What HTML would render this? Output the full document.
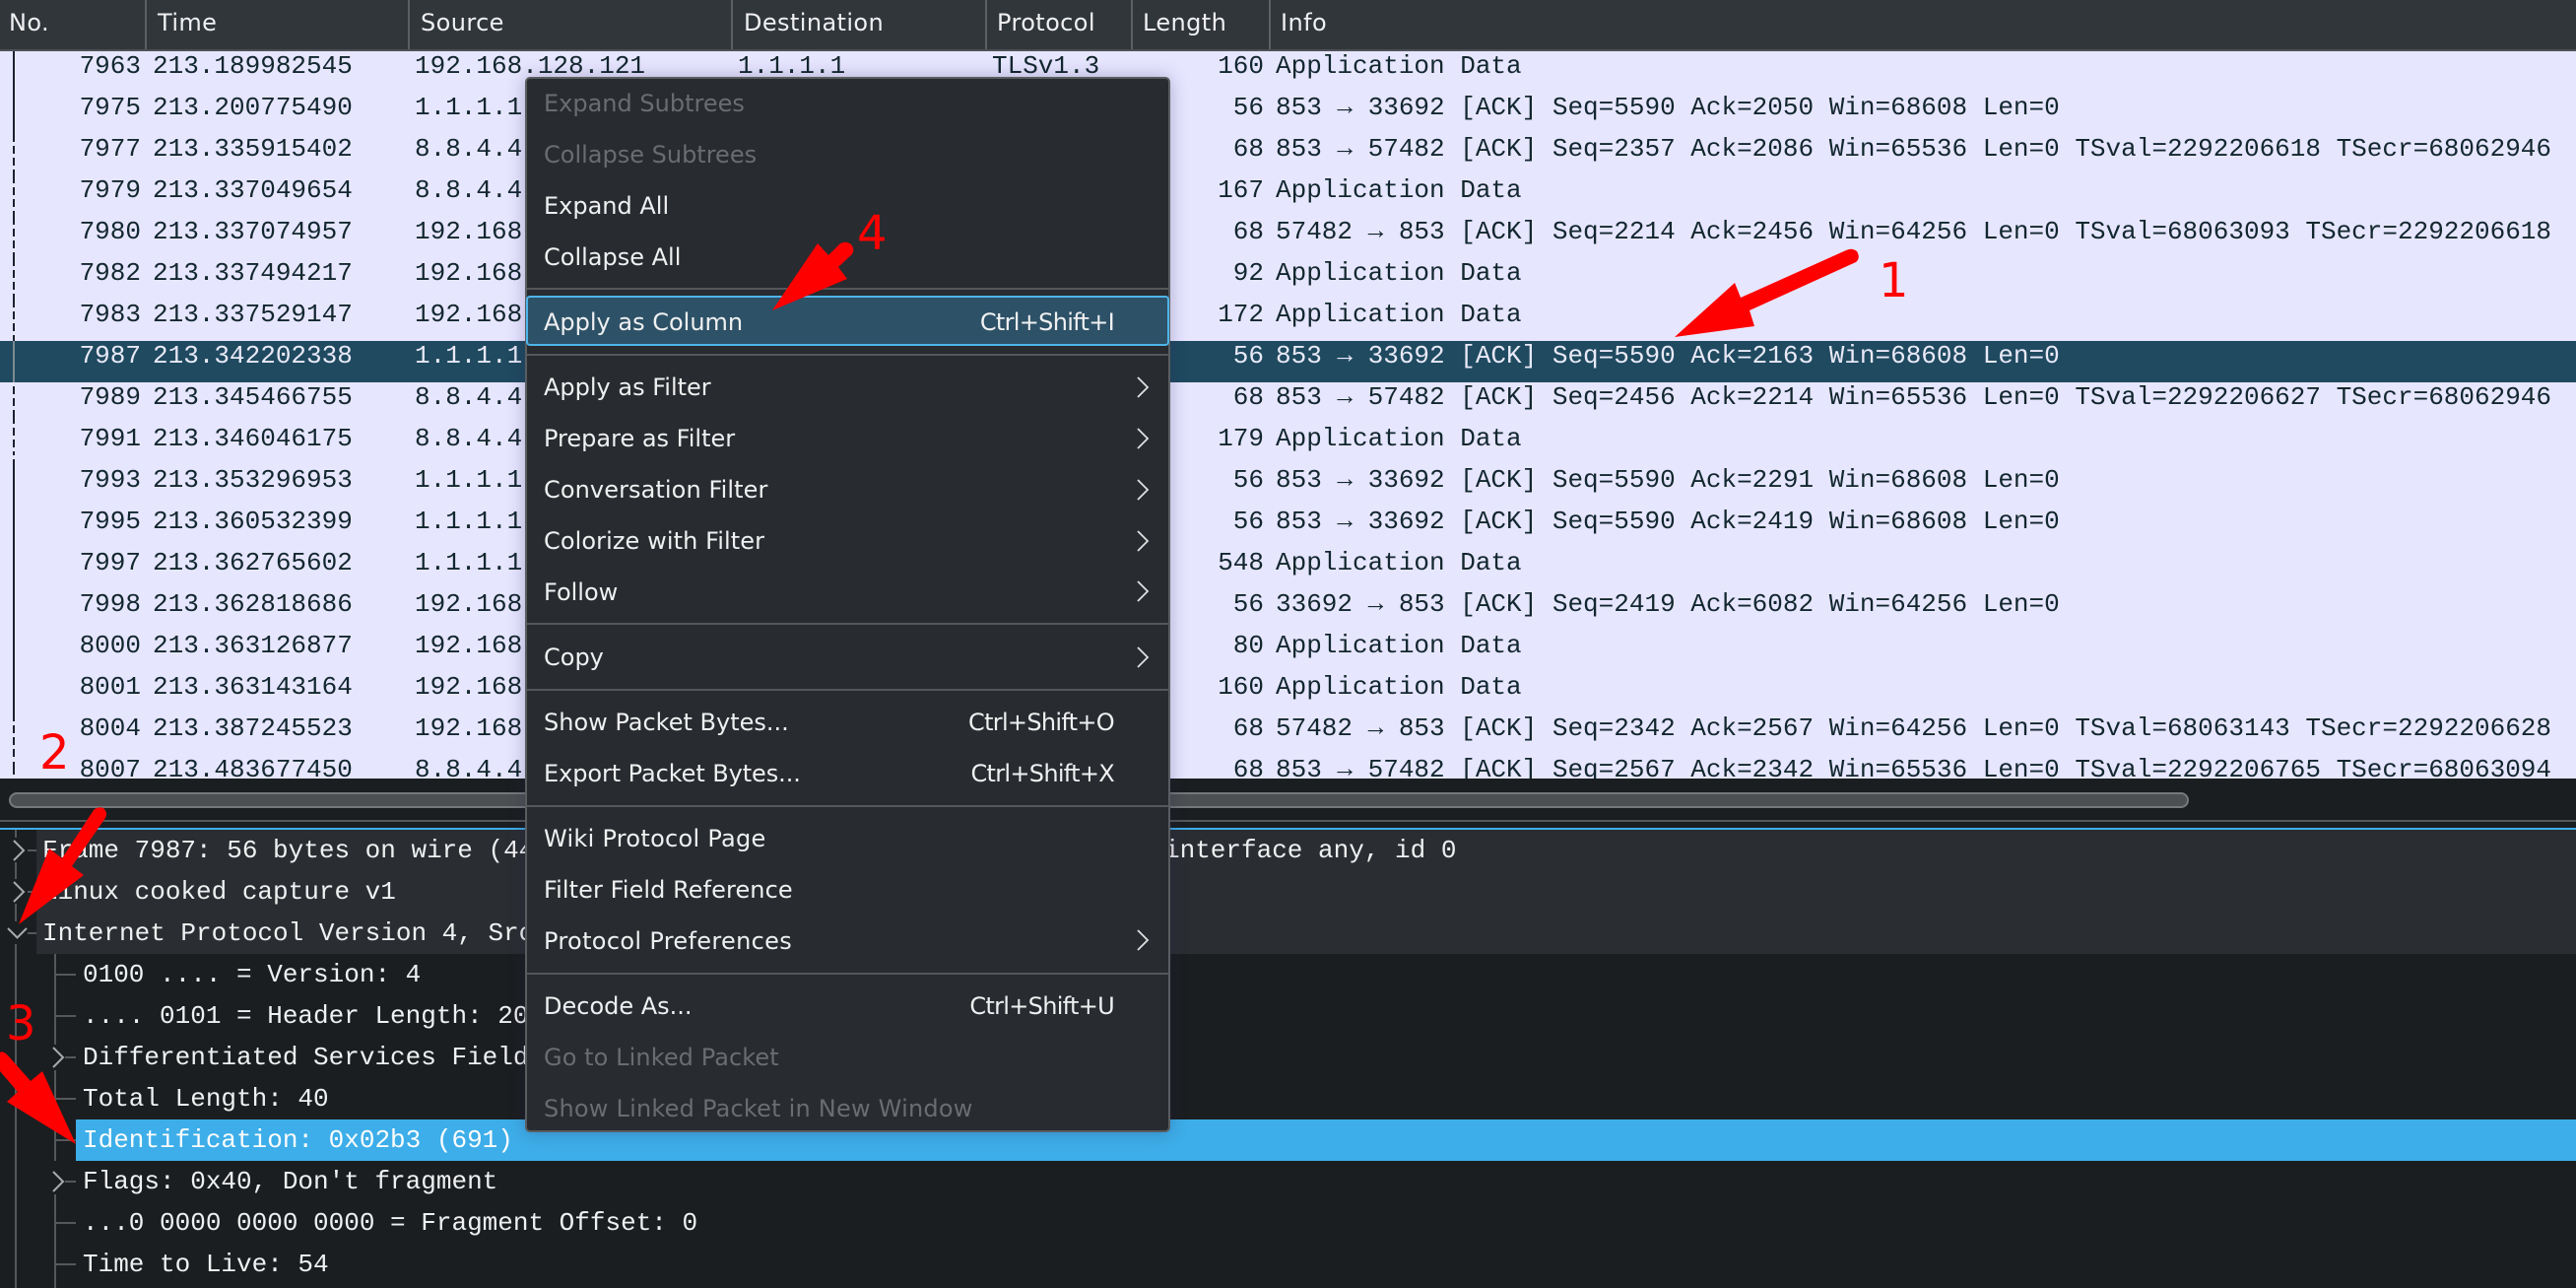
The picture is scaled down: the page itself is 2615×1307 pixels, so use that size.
<!DOCTYPE html>
<html><head><meta charset="utf-8"><style>
html,body{margin:0;padding:0;width:2615px;height:1307px;overflow:hidden;background:#1b1e20}
body{position:relative;font-family:"Liberation Mono",monospace}
#hd{position:absolute;left:0;top:0;width:2615px;height:50px;background:#31363b;border-bottom:2px solid #4d5156;font:24px/46px "DejaVu Sans",sans-serif;color:#eff0f1;letter-spacing:.4px}
#hd span{position:absolute;top:0}
#hd i{position:absolute;top:0;width:2px;height:50px;background:#5b6065}
#list{position:absolute;left:0;top:52px;width:2615px;height:738px;overflow:hidden;background:#e7e6ff;font-size:26px;color:#12272e}
.r{position:absolute;left:0;width:2615px;height:42px;line-height:30px;white-space:pre}
.r span{position:absolute;top:0}
.a{right:2472px}.b{left:155px}.c{left:421px}.d{left:749px}.e{left:1007px}.f{right:1332px}.g{left:1295px}
.s{background:#1f4a60;color:#e9e9f7}
#tree{position:absolute;left:0;top:842px;width:2615px;height:465px;overflow:hidden;font-size:26px;color:#eff0f1}
.t{position:absolute;height:42px;line-height:42px;white-space:pre;right:0}
.g1{background:#2a2e32;left:37px;padding-left:6px}
.l2{left:77px;padding-left:7px}
.hl{background:#3daee9;color:#fcfcfc}
#menu{position:absolute;left:533px;top:78px;width:651px;height:1067px;background:#282b2f;border:2px solid #5a5d60;border-radius:5px;box-shadow:0 0 18px rgba(40,30,80,.3)}
.m{position:absolute;left:17px;height:32px;line-height:32px;font:24px/32px "DejaVu Sans",sans-serif;color:#eff0f1;white-space:pre}
.k{position:absolute;right:55px;height:32px;font:24px/32px "DejaVu Sans",sans-serif;color:#eff0f1;white-space:pre;letter-spacing:-.7px}
.x{color:#6a6d70}
.sp{position:absolute;left:0;width:651px;height:2px;background:#55585a}
.lb{position:absolute;font:48px/56px "DejaVu Sans",sans-serif;color:#f00}
svg{position:absolute;left:0;top:0}
</style></head><body>

<div id="hd">
<span style="left:9px">No.</span><i style="left:147px"></i>
<span style="left:160px">Time</span><i style="left:414px"></i>
<span style="left:427px">Source</span><i style="left:742px"></i>
<span style="left:755px">Destination</span><i style="left:1000px"></i>
<span style="left:1012px">Protocol</span><i style="left:1148px"></i>
<span style="left:1160px">Length</span><i style="left:1288px"></i>
<span style="left:1300px">Info</span>
</div>

<div id="list">
<div class="r" style="top:0"><span class="a">7963</span><span class="b">213.189982545</span><span class="c">192.168.128.121</span><span class="d">1.1.1.1</span><span class="e">TLSv1.3</span><span class="f">160</span><span class="g">Application Data</span></div>
<div class="r" style="top:42px"><span class="a">7975</span><span class="b">213.200775490</span><span class="c">1.1.1.1</span><span class="f">56</span><span class="g">853 → 33692 [ACK] Seq=5590 Ack=2050 Win=68608 Len=0</span></div>
<div class="r" style="top:84px"><span class="a">7977</span><span class="b">213.335915402</span><span class="c">8.8.4.4</span><span class="f">68</span><span class="g">853 → 57482 [ACK] Seq=2357 Ack=2086 Win=65536 Len=0 TSval=2292206618 TSecr=68062946</span></div>
<div class="r" style="top:126px"><span class="a">7979</span><span class="b">213.337049654</span><span class="c">8.8.4.4</span><span class="f">167</span><span class="g">Application Data</span></div>
<div class="r" style="top:168px"><span class="a">7980</span><span class="b">213.337074957</span><span class="c">192.168.128.121</span><span class="f">68</span><span class="g">57482 → 853 [ACK] Seq=2214 Ack=2456 Win=64256 Len=0 TSval=68063093 TSecr=2292206618</span></div>
<div class="r" style="top:210px"><span class="a">7982</span><span class="b">213.337494217</span><span class="c">192.168.128.121</span><span class="f">92</span><span class="g">Application Data</span></div>
<div class="r" style="top:252px"><span class="a">7983</span><span class="b">213.337529147</span><span class="c">192.168.128.121</span><span class="f">172</span><span class="g">Application Data</span></div>
<div class="r s" style="top:294px"><span class="a">7987</span><span class="b">213.342202338</span><span class="c">1.1.1.1</span><span class="f">56</span><span class="g">853 → 33692 [ACK] Seq=5590 Ack=2163 Win=68608 Len=0</span></div>
<div class="r" style="top:336px"><span class="a">7989</span><span class="b">213.345466755</span><span class="c">8.8.4.4</span><span class="f">68</span><span class="g">853 → 57482 [ACK] Seq=2456 Ack=2214 Win=65536 Len=0 TSval=2292206627 TSecr=68062946</span></div>
<div class="r" style="top:378px"><span class="a">7991</span><span class="b">213.346046175</span><span class="c">8.8.4.4</span><span class="f">179</span><span class="g">Application Data</span></div>
<div class="r" style="top:420px"><span class="a">7993</span><span class="b">213.353296953</span><span class="c">1.1.1.1</span><span class="f">56</span><span class="g">853 → 33692 [ACK] Seq=5590 Ack=2291 Win=68608 Len=0</span></div>
<div class="r" style="top:462px"><span class="a">7995</span><span class="b">213.360532399</span><span class="c">1.1.1.1</span><span class="f">56</span><span class="g">853 → 33692 [ACK] Seq=5590 Ack=2419 Win=68608 Len=0</span></div>
<div class="r" style="top:504px"><span class="a">7997</span><span class="b">213.362765602</span><span class="c">1.1.1.1</span><span class="f">548</span><span class="g">Application Data</span></div>
<div class="r" style="top:546px"><span class="a">7998</span><span class="b">213.362818686</span><span class="c">192.168.128.121</span><span class="f">56</span><span class="g">33692 → 853 [ACK] Seq=2419 Ack=6082 Win=64256 Len=0</span></div>
<div class="r" style="top:588px"><span class="a">8000</span><span class="b">213.363126877</span><span class="c">192.168.128.121</span><span class="f">80</span><span class="g">Application Data</span></div>
<div class="r" style="top:630px"><span class="a">8001</span><span class="b">213.363143164</span><span class="c">192.168.128.121</span><span class="f">160</span><span class="g">Application Data</span></div>
<div class="r" style="top:672px"><span class="a">8004</span><span class="b">213.387245523</span><span class="c">192.168.128.121</span><span class="f">68</span><span class="g">57482 → 853 [ACK] Seq=2342 Ack=2567 Win=64256 Len=0 TSval=68063143 TSecr=2292206628</span></div>
<div class="r" style="top:714px"><span class="a">8007</span><span class="b">213.483677450</span><span class="c">8.8.4.4</span><span class="f">68</span><span class="g">853 → 57482 [ACK] Seq=2567 Ack=2342 Win=65536 Len=0 TSval=2292206765 TSecr=68063094</span></div>
</div>

<!-- related packet line -->
<svg width="40" height="800" shape-rendering="crispEdges" style="z-index:1">
<g fill="#1a2233">
<rect x="13" y="52" width="2" height="92"/>
<rect x="13" y="148" width="2" height="8"/><rect x="13" y="160" width="2" height="8"/><rect x="13" y="172" width="2" height="14"/>
<rect x="13" y="190" width="2" height="8"/><rect x="13" y="202" width="2" height="8"/><rect x="13" y="214" width="2" height="14"/>
<rect x="13" y="232" width="2" height="8"/><rect x="13" y="244" width="2" height="8"/><rect x="13" y="256" width="2" height="14"/>
<rect x="13" y="274" width="2" height="8"/><rect x="13" y="286" width="2" height="8"/><rect x="13" y="298" width="2" height="14"/>
<rect x="13" y="316" width="2" height="8"/><rect x="13" y="328" width="2" height="8"/><rect x="13" y="340" width="2" height="6"/>
<rect x="13" y="392" width="2" height="8"/><rect x="13" y="404" width="2" height="8"/><rect x="13" y="416" width="2" height="14"/>
<rect x="13" y="434" width="2" height="8"/><rect x="13" y="446" width="2" height="8"/><rect x="13" y="458" width="2" height="4"/>
<rect x="13" y="466" width="2" height="266"/>
<rect x="13" y="736" width="2" height="8"/><rect x="13" y="748" width="2" height="8"/><rect x="13" y="760" width="2" height="8"/><rect x="13" y="773" width="2" height="13"/>
</g>
<rect x="13" y="346" width="2" height="42" fill="#7c8a90"/>
</svg>

<!-- scrollbar and dividers -->
<div style="position:absolute;left:9px;top:804px;width:2209px;height:12px;background:#4d5052;border:2px solid #76797b;border-radius:8px"></div>
<div style="position:absolute;left:0;top:832px;width:2615px;height:2px;background:#55585a"></div>
<div style="position:absolute;left:0;top:840px;width:2615px;height:2px;background:#3daee9"></div>

<div id="tree">
<div class="t g1" style="top:0">Frame 7987: 56 bytes on wire (448 bits), 56 bytes captured (448 bits) on interface any, id 0</div>
<div class="t g1" style="top:42px">Linux cooked capture v1</div>
<div class="t g1" style="top:84px">Internet Protocol Version 4, Src: 1.1.1.1, Dst: 192.168.128.121</div>
<div class="t l2" style="top:126px">0100 .... = Version: 4</div>
<div class="t l2" style="top:168px">.... 0101 = Header Length: 20 bytes (5)</div>
<div class="t l2" style="top:210px">Differentiated Services Field: 0x00 (DSCP: CS0, ECN: Not-ECT)</div>
<div class="t l2" style="top:252px">Total Length: 40</div>
<div class="t l2 hl" style="top:294px">Identification: 0x02b3 (691)</div>
<div class="t l2" style="top:336px">Flags: 0x40, Don't fragment</div>
<div class="t l2" style="top:378px">...0 0000 0000 0000 = Fragment Offset: 0</div>
<div class="t l2" style="top:420px">Time to Live: 54</div>
<div class="t l2" style="top:462px">Protocol: TCP (6)</div>
</div>

<!-- tree lines -->
<svg width="90" height="1307" style="z-index:1">
<g fill="#55585b" shape-rendering="crispEdges">
<rect x="15" y="842" width="2" height="8"/><rect x="15" y="875" width="2" height="17"/><rect x="15" y="917" width="2" height="18"/><rect x="15" y="958" width="2" height="349"/>
<rect x="28" y="862" width="9" height="2"/><rect x="28" y="904" width="9" height="2"/><rect x="28" y="946" width="9" height="2"/>
<rect x="55" y="968" width="2" height="92"/><rect x="55" y="1086" width="2" height="92"/><rect x="55" y="1212" width="2" height="95"/>
<rect x="57" y="988" width="20" height="2"/><rect x="57" y="1030" width="20" height="2"/><rect x="66" y="1072" width="11" height="2"/><rect x="57" y="1114" width="20" height="2"/><rect x="57" y="1156" width="20" height="2"/><rect x="66" y="1198" width="11" height="2"/><rect x="57" y="1240" width="20" height="2"/><rect x="57" y="1282" width="20" height="2"/>
</g>
<g fill="none" stroke="#a8aaac" stroke-width="2">
<path d="M14 853L24 863L14 873"/><path d="M14 895L24 905L14 915"/><path d="M8 942L17.500 951.500L27 942"/>
<path d="M54 1063L64 1073L54 1083"/><path d="M54 1189L64 1199L54 1209"/>
</g>
</svg>

<!-- menu -->
<div id="menu" style="z-index:2">
<div class="m x" style="top:9px">Expand Subtrees</div>
<div class="m x" style="top:61px">Collapse Subtrees</div>
<div class="m" style="top:113px">Expand All</div>
<div class="m" style="top:165px">Collapse All</div>
<div class="sp" style="top:212px"></div>
<div style="position:absolute;left:-1px;top:220px;width:649px;height:47px;background:#2d5167;border:2px solid #4fb4ea;border-radius:4px"></div>
<div class="m" style="top:231px">Apply as Column</div><div class="k" style="top:231px">Ctrl+Shift+I</div>
<div class="sp" style="top:279px"></div>
<div class="m" style="top:297px">Apply as Filter</div>
<div class="m" style="top:349px">Prepare as Filter</div>
<div class="m" style="top:401px;letter-spacing:.09px">Conversation Filter</div>
<div class="m" style="top:453px;letter-spacing:.09px">Colorize with Filter</div>
<div class="m" style="top:505px">Follow</div>
<div class="sp" style="top:552px"></div>
<div class="m" style="top:571px">Copy</div>
<div class="sp" style="top:619px"></div>
<div class="m" style="top:637px">Show Packet Bytes...</div><div class="k" style="top:637px">Ctrl+Shift+O</div>
<div class="m" style="top:689px;letter-spacing:-.08px">Export Packet Bytes...</div><div class="k" style="top:689px">Ctrl+Shift+X</div>
<div class="sp" style="top:737px"></div>
<div class="m" style="top:755px;letter-spacing:.28px">Wiki Protocol Page</div>
<div class="m" style="top:807px;letter-spacing:.08px">Filter Field Reference</div>
<div class="m" style="top:859px;letter-spacing:.33px">Protocol Preferences</div>
<div class="sp" style="top:907px"></div>
<div class="m" style="top:925px">Decode As...</div><div class="k" style="top:925px">Ctrl+Shift+U</div>
<div class="m x" style="top:977px;letter-spacing:.09px">Go to Linked Packet</div>
<div class="m x" style="top:1029px;letter-spacing:.22px">Show Linked Packet in New Window</div>
</div>

<!-- submenu chevrons and annotation arrows -->
<svg width="2615" height="1307" style="z-index:3">
<g fill="none" stroke="#dfe0e1" stroke-width="1.800">
<path d="M1155 383L1165 393L1155 403"/><path d="M1155 435L1165 445L1155 455"/><path d="M1155 487L1165 497L1155 507"/><path d="M1155 539L1165 549L1155 559"/><path d="M1155 590L1165 600L1155 610"/><path d="M1155 657L1165 667L1155 677"/><path d="M1155 944L1165 954L1155 964"/>
</g>
<g fill="#f00">
<path d="M1700 342L1761 287L1767 302L1874 254Q1880 251 1885 255Q1889 262 1884 266L1776 315L1781 331Z"/>
<path d="M784 315L830 247L841 259L853 247Q859 244 864 248Q868 253 865 258L851 271L860 283Z"/>
<path d="M19 938L50 861L63 871L95 822Q99 818 105 820Q110 825 107 830L73 879L85 888Z"/>
<path d="M77 1161L43 1087L31 1097L8 1071Q3 1066 0 1068L0 1087L18 1108L7 1118Z"/>
</g>
</svg>

<div class="lb" style="left:1907px;top:257px;z-index:4">1</div>
<div class="lb" style="left:40px;top:736px;z-index:4">2</div>
<div class="lb" style="left:6px;top:1011px;z-index:4">3</div>
<div class="lb" style="left:870px;top:209px;z-index:4">4</div>

</body></html>
